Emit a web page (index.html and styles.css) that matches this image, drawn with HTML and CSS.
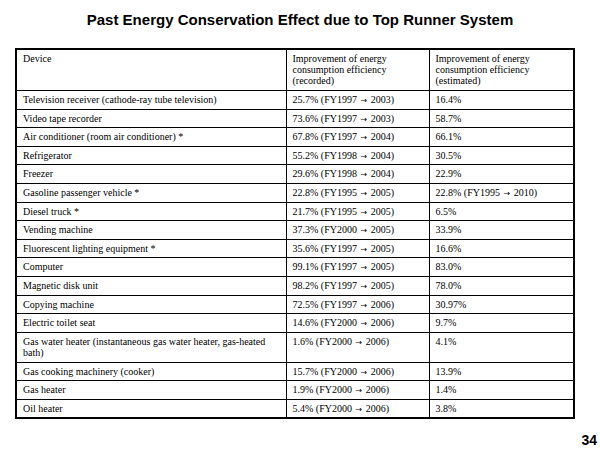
FILE: index.html
```html
<!DOCTYPE html>
<html>
<head>
<meta charset="utf-8">
<link rel="stylesheet" href="styles.css">
</head>
<body>
<div class="slide">
  <h1 class="title">Past Energy Conservation Effect due to Top Runner System</h1>
  <table class="data">
    <colgroup>
      <col class="c1"><col class="c2"><col class="c3">
    </colgroup>
    <tr class="head"><td>Device</td><td>Improvement of energy consumption efficiency (recorded)</td><td>Improvement of energy consumption efficiency (estimated)</td></tr>
    <tr><td>Television receiver (cathode-ray tube television)</td><td>25.7% (FY1997 <span class="arr">→</span> 2003)</td><td>16.4%</td></tr>
    <tr><td>Video tape recorder</td><td>73.6% (FY1997 <span class="arr">→</span> 2003)</td><td>58.7%</td></tr>
    <tr><td>Air conditioner (room air conditioner) *</td><td>67.8% (FY1997 <span class="arr">→</span> 2004)</td><td>66.1%</td></tr>
    <tr><td>Refrigerator</td><td>55.2% (FY1998 <span class="arr">→</span> 2004)</td><td>30.5%</td></tr>
    <tr><td>Freezer</td><td>29.6% (FY1998 <span class="arr">→</span> 2004)</td><td>22.9%</td></tr>
    <tr><td>Gasoline passenger vehicle *</td><td>22.8% (FY1995 <span class="arr">→</span> 2005)</td><td>22.8% (FY1995 <span class="arr">→</span> 2010)</td></tr>
    <tr><td>Diesel truck *</td><td>21.7% (FY1995 <span class="arr">→</span> 2005)</td><td>6.5%</td></tr>
    <tr><td>Vending machine</td><td>37.3% (FY2000 <span class="arr">→</span> 2005)</td><td>33.9%</td></tr>
    <tr><td>Fluorescent lighting equipment *</td><td>35.6% (FY1997 <span class="arr">→</span> 2005)</td><td>16.6%</td></tr>
    <tr><td>Computer</td><td>99.1% (FY1997 <span class="arr">→</span> 2005)</td><td>83.0%</td></tr>
    <tr><td>Magnetic disk unit</td><td>98.2% (FY1997 <span class="arr">→</span> 2005)</td><td>78.0%</td></tr>
    <tr><td>Copying machine</td><td>72.5% (FY1997 <span class="arr">→</span> 2006)</td><td>30.97%</td></tr>
    <tr><td>Electric toilet seat</td><td>14.6% (FY2000 <span class="arr">→</span> 2006)</td><td>9.7%</td></tr>
    <tr><td>Gas water heater (instantaneous gas water heater, gas-heated bath)</td><td>1.6% (FY2000 <span class="arr">→</span> 2006)</td><td>4.1%</td></tr>
    <tr><td>Gas cooking machinery (cooker)</td><td>15.7% (FY2000 <span class="arr">→</span> 2006)</td><td>13.9%</td></tr>
    <tr><td>Gas heater</td><td>1.9% (FY2000 <span class="arr">→</span> 2006)</td><td>1.4%</td></tr>
    <tr><td>Oil heater</td><td>5.4% (FY2000 <span class="arr">→</span> 2006)</td><td>3.8%</td></tr>
  </table>
  <div class="pageno">34</div>
</div>
</body>
</html>
```

FILE: styles.css
```css
html, body {
  margin: 0;
  padding: 0;
  background: #ffffff;
}
.slide {
  width: 600px;
  height: 450px;
  display: flex;
  flex-direction: column;
  box-sizing: border-box;
  padding: 0 0 0 15px;
}
.title {
  margin: 11px 0 0 0;
  font-family: "Liberation Sans", Arial, sans-serif;
  font-weight: bold;
  font-size: 15px;
  line-height: 18px;
  text-align: center;
  color: #000;
  width: 570px;
}
.data {
  margin-top: 19px;
  border-collapse: collapse;
  table-layout: fixed;
  width: 558px;
  border: 2px solid #000;
  font-family: "Liberation Serif", "Times New Roman", serif;
  font-size: 10px;
  line-height: 11.2px;
  color: #000;
}
.c1 { width: 270px; }
.c2 { width: 143px; }
.c3 { width: 145px; }
.data td {
  border: 1px solid #000;
  padding: 3px 5px 3.4px 6px;
  vertical-align: top;
  text-align: left;
}
.arr {
  font-family: "DejaVu Sans", sans-serif;
  font-size: 8px;
  line-height: 0;
  padding: 0 1px;
}
.pageno {
  margin-top: auto;
  margin-bottom: 3px;
  font-family: "Liberation Sans", Arial, sans-serif;
  font-weight: bold;
  font-size: 14px;
  line-height: 14px;
  text-align: right;
  padding-right: 3px;
  color: #000;
}
```
